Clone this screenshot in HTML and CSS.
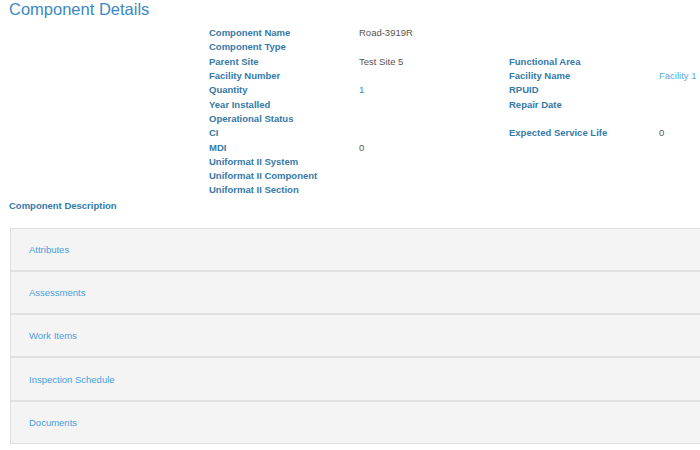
FILE: index.html
```html
<!DOCTYPE html>
<html>
<head>
<meta charset="utf-8">
<link rel="stylesheet" href="styles.css">
</head>
<body>
<h1 class="title">Component Details</h1>
<div class="details">
  <div class="lbl">Component Name</div><div class="val">Road-3919R</div><div></div><div></div>
  <div class="lbl">Component Type</div><div></div><div></div><div></div>
  <div class="lbl">Parent Site</div><div class="val">Test Site 5</div><div class="lbl">Functional Area</div><div></div>
  <div class="lbl">Facility Number</div><div></div><div class="lbl">Facility Name</div><div class="val link">Facility 1</div>
  <div class="lbl">Quantity</div><div class="val qty">1</div><div class="lbl">RPUID</div><div></div>
  <div class="lbl">Year Installed</div><div></div><div class="lbl">Repair Date</div><div></div>
  <div class="lbl">Operational Status</div><div></div><div></div><div></div>
  <div class="lbl">CI</div><div></div><div class="lbl">Expected Service Life</div><div class="val">0</div>
  <div class="lbl">MDI</div><div class="val">0</div><div></div><div></div>
  <div class="lbl">Uniformat II System</div><div></div><div></div><div></div>
  <div class="lbl">Uniformat II Component</div><div></div><div></div><div></div>
  <div class="lbl">Uniformat II Section</div><div></div><div></div><div></div>
</div>
<div class="desc">Component Description</div>
<div class="panels">
  <div class="panel"><a class="panel-link">Attributes</a></div>
  <div class="panel"><a class="panel-link">Assessments</a></div>
  <div class="panel"><a class="panel-link">Work Items</a></div>
  <div class="panel"><a class="panel-link">Inspection Schedule</a></div>
  <div class="panel"><a class="panel-link">Documents</a></div>
</div>
</body>
</html>
```
FILE: styles.css
```css
html { overflow: hidden; }
body {
  margin: 0;
  padding: 0 0 0 9px;
  font-family: "Liberation Sans", Arial, sans-serif;
  font-size: 9.5px;
  color: #555;
  background: #fff;
}
.title {
  margin: 0;
  font-size: 16.5px;
  font-weight: normal;
  line-height: 19px;
  color: #3b88c4;
}
.details {
  margin: 7px 0 0 200px;
  display: grid;
  grid-template-columns: 150px 150px 150px 41px;
  grid-auto-rows: 14.3px;
  align-items: center;
  line-height: 14px;
}
.lbl {
  font-weight: bold;
  color: #3579a8;
  white-space: nowrap;
}
.val { color: #555; white-space: nowrap; }
.link { color: #5aa9e6; }
.qty { color: #3b7fb0; }
.desc {
  margin-top: 1px;
  line-height: 14px;
  font-weight: bold;
  color: #3579a8;
}
.panels {
  margin: 15px 0 0 1px;
  display: flex;
  flex-direction: column;
}
.panel {
  height: 41.3px;
  border: 1px solid #e0e0e0;
  border-right: none;
  background: #f4f4f4;
  display: flex;
  align-items: center;
  padding-left: 18px;
}
.panel-link {
  color: #4a9ee0;
  font-size: 9.5px;
}
```
